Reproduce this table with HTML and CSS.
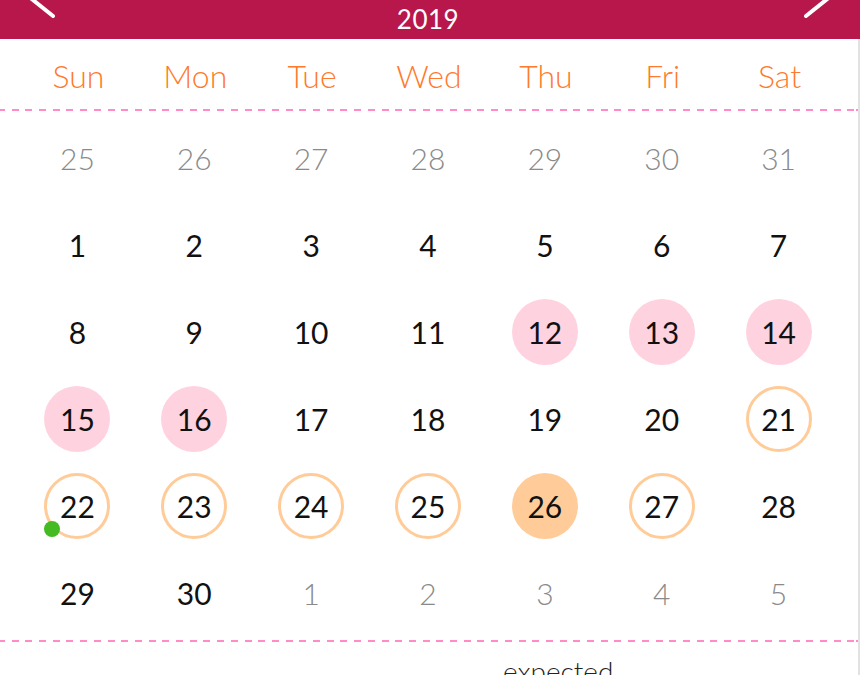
FILE: index.html
```html
<!DOCTYPE html>
<html lang="en">
<head>
<meta charset="utf-8">
<title>Calendar 2019</title>
<link rel="stylesheet" href="styles.css">
</head>
<body>
<div class="app">
  <header class="bar">
    <svg class="chev" width="60" height="39" viewBox="0 0 60 39"><polyline points="53,-32 23,-8 53,16" fill="none" stroke="#fff" stroke-width="4" stroke-linecap="round" stroke-linejoin="round"/></svg>
    <div class="year">2019</div>
    <svg class="chev" width="60" height="39" viewBox="0 0 60 39"><polyline points="6,-32 36,-8 6,16" fill="none" stroke="#fff" stroke-width="4" stroke-linecap="round" stroke-linejoin="round"/></svg>
  </header>
  <main class="content">
    <div class="weekdays">
      <div>Sun</div><div>Mon</div><div>Tue</div><div>Wed</div><div>Thu</div><div>Fri</div><div>Sat</div>
    </div>
    <div class="dash"></div>
    <div class="days">
      <div class="cell"><span class="n muted">25</span></div>
      <div class="cell"><span class="n muted">26</span></div>
      <div class="cell"><span class="n muted">27</span></div>
      <div class="cell"><span class="n muted">28</span></div>
      <div class="cell"><span class="n muted">29</span></div>
      <div class="cell"><span class="n muted">30</span></div>
      <div class="cell"><span class="n muted">31</span></div>

      <div class="cell"><span class="n">1</span></div>
      <div class="cell"><span class="n">2</span></div>
      <div class="cell"><span class="n">3</span></div>
      <div class="cell"><span class="n">4</span></div>
      <div class="cell"><span class="n">5</span></div>
      <div class="cell"><span class="n">6</span></div>
      <div class="cell"><span class="n">7</span></div>

      <div class="cell"><span class="n">8</span></div>
      <div class="cell"><span class="n">9</span></div>
      <div class="cell"><span class="n">10</span></div>
      <div class="cell"><span class="n">11</span></div>
      <div class="cell"><span class="n period">12</span></div>
      <div class="cell"><span class="n period">13</span></div>
      <div class="cell"><span class="n period">14</span></div>

      <div class="cell"><span class="n period">15</span></div>
      <div class="cell"><span class="n period">16</span></div>
      <div class="cell"><span class="n">17</span></div>
      <div class="cell"><span class="n">18</span></div>
      <div class="cell"><span class="n">19</span></div>
      <div class="cell"><span class="n">20</span></div>
      <div class="cell"><span class="n fertile">21</span></div>

      <div class="cell"><span class="n fertile">22<i class="dot"></i></span></div>
      <div class="cell"><span class="n fertile">23</span></div>
      <div class="cell"><span class="n fertile">24</span></div>
      <div class="cell"><span class="n fertile">25</span></div>
      <div class="cell"><span class="n ovulation">26</span></div>
      <div class="cell"><span class="n fertile">27</span></div>
      <div class="cell"><span class="n">28</span></div>

      <div class="cell"><span class="n">29</span></div>
      <div class="cell"><span class="n">30</span></div>
      <div class="cell"><span class="n muted">1</span></div>
      <div class="cell"><span class="n muted">2</span></div>
      <div class="cell"><span class="n muted">3</span></div>
      <div class="cell"><span class="n muted">4</span></div>
      <div class="cell"><span class="n muted">5</span></div>
    </div>
    <div class="dash"></div>
    <div class="legend"><span class="legend-label">expected</span></div>
  </main>
</div>
</body>
</html>
```

FILE: styles.css
```css
html, body {
  margin: 0;
  padding: 0;
}
body {
  background: #ffffff;
  font-family: "Lato", "Open Sans", sans-serif;
  overflow: hidden;
}
.app {
  width: 860px;
  height: 675px;
  overflow: hidden;
}
.bar {
  height: 39px;
  background: #b8174c;
  display: flex;
  justify-content: space-between;
  align-items: stretch;
  overflow: hidden;
}
.chev {
  display: block;
  flex: 0 0 auto;
}
.year {
  color: #ffffff;
  font-size: 26px;
  font-weight: 400;
  line-height: 39px;
  letter-spacing: 0.5px;
  margin-left: -4px;
}
.content {
  width: 858px;
  border-right: 2px solid #e2e2e2;
  background: #fff;
  height: 636px;
}
.weekdays {
  height: 70px;
  padding: 0 20px;
  display: grid;
  grid-template-columns: repeat(7, 1fr);
  align-items: center;
  color: #ff7a2c;
  font-size: 32px;
  font-weight: 300;
  box-sizing: border-box;
}
.weekdays div {
  text-align: center;
  padding-top: 2px;
}
.dash {
  height: 2px;
  background: repeating-linear-gradient(90deg, #ff8cc8 0 7px, transparent 7px 13.7px);
  background-position: -2px 0;
}
.days {
  padding: 3px 20px 4px;
  display: grid;
  grid-template-columns: repeat(7, 1fr);
  grid-auto-rows: 87px;
}
.cell {
  display: flex;
  align-items: center;
  justify-content: center;
}
.n {
  position: relative;
  width: 66px;
  height: 66px;
  box-sizing: border-box;
  border-radius: 50%;
  display: flex;
  align-items: center;
  justify-content: center;
  font-size: 30px;
  font-weight: 400;
  color: #111;
  margin-right: 2px;
}
.n.muted {
  color: #8a8a8a;
  font-weight: 300;
}
.n.period {
  background: #ffd2df;
}
.n.fertile {
  border: 3px solid #ffcc99;
}
.n.ovulation {
  background: #ffcc99;
}
.dot {
  position: absolute;
  left: -3px;
  top: 45px;
  width: 16px;
  height: 16px;
  border-radius: 50%;
  background: #44bb22;
}
.legend {
  display: flex;
  padding-left: 503px;
  padding-top: 12px;
}
.legend-label {
  font-size: 28px;
  font-weight: 300;
  color: #222;
}
```
